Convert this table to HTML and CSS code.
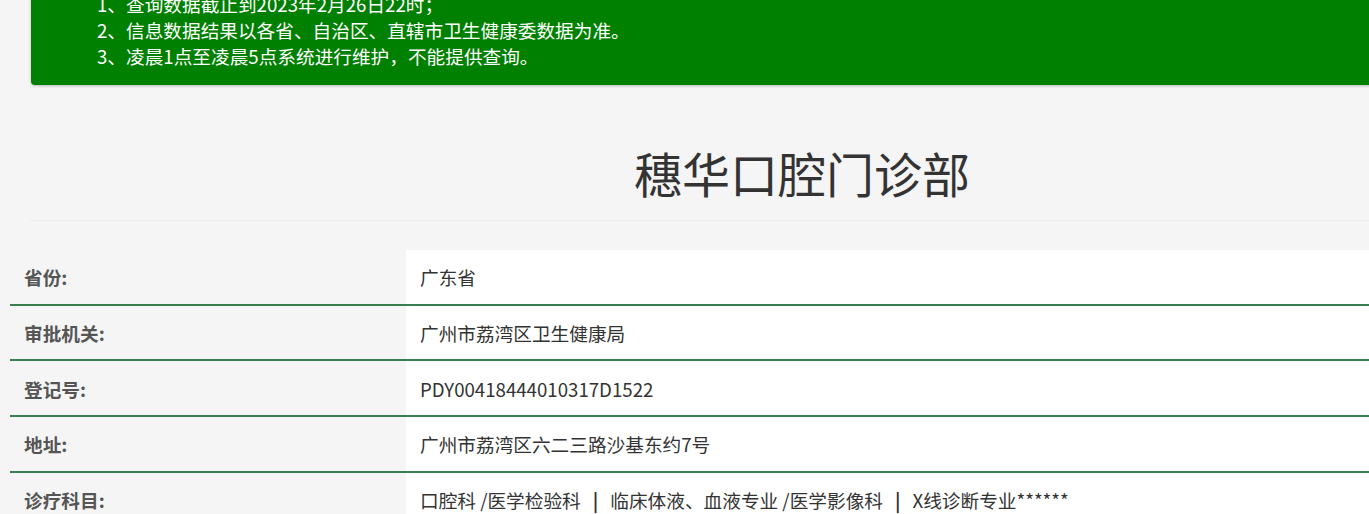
FILE: index.html
```html
<!DOCTYPE html>
<html lang="zh-CN">
<head>
<meta charset="utf-8">
<title>穗华口腔门诊部</title>
<link rel="stylesheet" href="styles.css">
</head>
<body>
<div class="page">
  <div class="notice">
    <p>1、查询数据截止到2023年2月26日22时；</p>
    <p>2、信息数据结果以各省、自治区、直辖市卫生健康委数据为准。</p>
    <p>3、凌晨1点至凌晨5点系统进行维护，不能提供查询。</p>
  </div>
  <h1 class="title">穗华口腔门诊部</h1>
  <hr class="rule">
  <table class="info">
    <tr><th>省份:</th><td>广东省</td></tr>
    <tr><th>审批机关:</th><td>广州市荔湾区卫生健康局</td></tr>
    <tr><th>登记号:</th><td>PDY00418444010317D1522</td></tr>
    <tr><th>地址:</th><td>广州市荔湾区六二三路沙基东约7号</td></tr>
    <tr><th>诊疗科目:</th><td>口腔科 /医学检验科<span class="sep">|</span>临床体液、血液专业 /医学影像科<span class="sep">|</span>X线诊断专业******</td></tr>
  </table>
</div>
</body>
</html>
```
FILE: styles.css
```css
html, body {
  margin: 0;
  padding: 0;
  overflow: hidden;
  background: #f5f5f5;
}
body {
  font-family: "Noto Sans CJK SC", "Liberation Sans", sans-serif;
  font-size: 18.67px;
  color: #333;
}
.page {
  width: 1584px;
  margin-left: 10px;
}
.notice {
  margin: -23px 0 0 21px;
  padding: 14px 0 16px 66px;
  background: #008000;
  color: #fff;
  border-radius: 0 0 4px 4px;
  box-shadow: 0 1px 3px rgba(0,0,0,0.25);
}
.notice p {
  margin: 0;
  line-height: 26px;
}
.title {
  margin: 61px 0 0;
  text-align: center;
  font-size: 48px;
  font-weight: normal;
  line-height: 53px;
  color: #333;
}
.rule {
  margin: 21px 0 0 20px;
  border: 0;
  border-top: 1px solid #ebebeb;
  height: 0;
}
.info {
  margin-top: 29px;
  width: 100%;
  border-collapse: collapse;
}
.info th, .info td {
  height: 53.67px;
  padding: 0 14px;
  border-bottom: 2px solid #3a7d52;
  text-align: left;
  vertical-align: middle;
}
.info th {
  width: 25%;
  box-sizing: border-box;
  font-weight: bold;
  color: #555;
  background: #f5f5f5;
}
.info td {
  background: #fff;
  color: #333;
}
.sep {
  margin: 0 12px;
  font-weight: bold;
}
```
